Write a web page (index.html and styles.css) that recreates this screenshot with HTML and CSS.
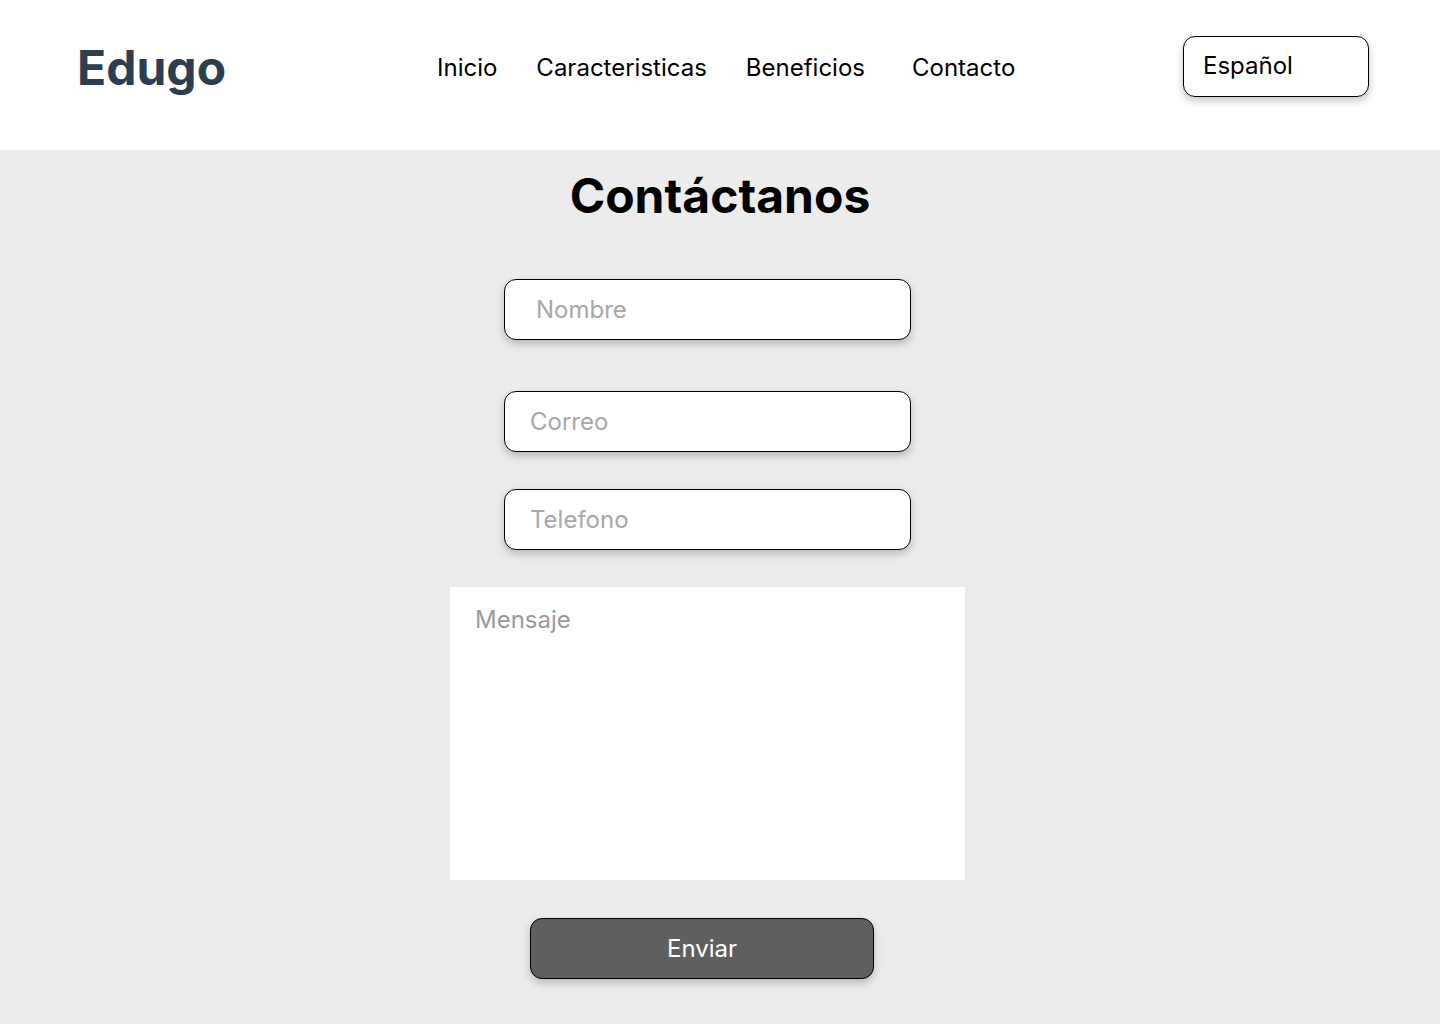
FILE: index.html
```html
<!DOCTYPE html>
<html lang="es">
<head>
<meta charset="utf-8">
<title>Edugo - Contacto</title>
<link rel="stylesheet" href="styles.css">
</head>
<body>
<header class="header">
  <div class="logo">Edugo</div>
  <nav class="nav">
    <a class="nav-link" href="#">Inicio</a>
    <a class="nav-link" href="#">Caracteristicas</a>
    <a class="nav-link" href="#">Beneficios</a>
    <a class="nav-link nav-link-last" href="#">Contacto</a>
  </nav>
  <div class="lang">Español</div>
</header>
<main class="main">
  <h1 class="title">Contáctanos</h1>
  <form class="form">
    <input class="field field-name" type="text" placeholder="Nombre">
    <input class="field field-mail" type="email" placeholder="Correo">
    <input class="field field-phone" type="tel" placeholder="Telefono">
    <textarea class="message" placeholder="Mensaje"></textarea>
    <button class="submit" type="button">Enviar</button>
  </form>
</main>
</body>
</html>
```
FILE: styles.css
```css
* { box-sizing: border-box; }
html, body { margin: 0; padding: 0; }
body {
  font-family: Inter, "Noto Sans", sans-serif;
  background: #ececec;
  width: 1440px;
  height: 1024px;
  overflow: hidden;
}
.header {
  height: 150px;
  background: #ffffff;
  display: flex;
  align-items: center;
  padding: 0 71px 0 77px;
}
.logo {
  font-size: 48px;
  font-weight: 700;
  color: #2c3e50;
  width: 360px;
  margin-top: -16px;
}
.nav {
  display: flex;
  gap: 39px;
  flex: 1;
  margin-top: -16px;
}
.nav-link {
  font-size: 24px;
  color: #000;
  text-decoration: none;
}
.nav-link-last { margin-left: 8px; }
.lang {
  width: 186px;
  height: 61px;
  border: 1px solid #000;
  border-radius: 12px;
  background: #fff;
  box-shadow: 0 4px 8px rgba(0,0,0,0.22);
  font-size: 24px;
  display: flex;
  align-items: center;
  padding-left: 19px;
  padding-bottom: 2px;
  margin-top: -17px;
  color: #000;
}
.main {
  display: flex;
  flex-direction: column;
}
.title {
  margin: 20px 0 0;
  text-align: center;
  font-size: 48px;
  font-weight: 700;
  color: #000;
  line-height: 52px;
}
.form {
  display: flex;
  flex-direction: column;
  align-items: flex-start;
  width: 515px;
  margin: 57px 0 0 450px;
}
.field {
  width: 407px;
  height: 61px;
  margin-left: 54px;
  border: 1px solid #000;
  border-radius: 12px;
  background: #fff;
  box-shadow: 0 4px 8px rgba(0,0,0,0.22);
  font-family: inherit;
  font-size: 24px;
  padding: 0 0 0 25px;
  outline: none;
  color: #000;
}
.field::placeholder { color: #a8a8a8; }
.field-name { padding-left: 31px; }
.field-mail { margin-top: 51px; }
.field-phone { margin-top: 37px; }
.message {
  width: 515px;
  height: 293px;
  margin-top: 37px;
  border: none;
  background: #fff;
  resize: none;
  font-family: inherit;
  font-size: 24px;
  padding: 18px 25px 15px;
  outline: none;
  display: block;
}
.message::placeholder { color: #9a9a9a; }
.submit {
  width: 344px;
  height: 61px;
  margin: 38px 0 0 80px;
  background: #5f5f5f;
  border: 1px solid #000;
  border-radius: 12px;
  box-shadow: 0 4px 8px rgba(0,0,0,0.22);
  color: #fff;
  font-family: inherit;
  font-size: 24px;
}
```
